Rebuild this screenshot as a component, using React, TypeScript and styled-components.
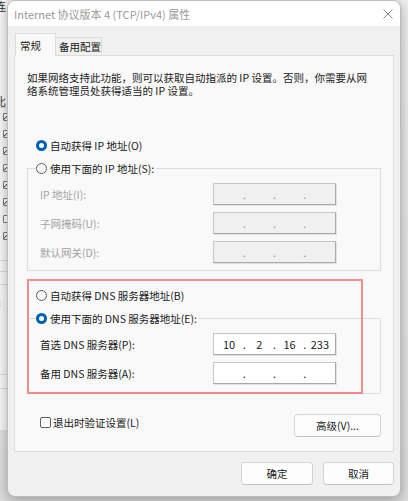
import React from 'react';
import styled, {createGlobalStyle} from 'styled-components';

const GlobalStyle = createGlobalStyle`
  html, body {
    margin: 0;
    padding: 0;
  }
  body {
    width: 408px;
    height: 501px;
    overflow: hidden;
    font-family: 'Noto Sans CJK SC', 'Noto Sans', sans-serif;
    background: #e6e6e6;
  }
`;

const Desktop = styled.div`
  display: flex;
  align-items: flex-start;
  width: 408px;
  height: 501px;
  overflow: hidden;
  background: linear-gradient(#ececec, #dcdcdc);
`;

const BackWindow = styled.div`
  width: 7px;
  height: 430px;
  flex-shrink: 0;
  display: flex;
  flex-direction: column;
  overflow: hidden;
  background: #f6f6f6;
  font-size: 11px;
  line-height: 12px;
  color: #333;
`;

const BackChar = styled.span<{$color?: string; $top: number}>`
  display: block;
  margin: ${p => p.$top}px 0 0 -5px;
  color: ${p => p.$color || '#333'};
`;

const BackList = styled.div`
  display: flex;
  flex-direction: column;
  gap: 9px;
  padding-top: 5px;
  border-top: 1px solid #dedede;
`;

const BackBox = styled.span<{$checked?: boolean}>`
  display: block;
  width: 7px;
  height: 8px;
  margin-left: 3px;
  box-sizing: border-box;
  border: 1px solid #777;
  border-radius: 1px;
  background: ${p => (p.$checked ? 'linear-gradient(135deg, #fff 40%, #555 45%, #fff 60%)' : '#fff')};
`;

const BackLine = styled.div<{$gap: number}>`
  margin-top: ${p => p.$gap}px;
  border-top: 1px solid #d8d8d8;
`;

const Dialog = styled.div`
  width: 394px;
  height: 497px;
  flex-shrink: 0;
  box-sizing: border-box;
  display: flex;
  flex-direction: column;
  border: 1px solid #bcbcbc;
  border-radius: 8px;
  overflow: hidden;
  background: #f0f0f0;
  box-shadow: 0 3px 12px rgba(0, 0, 0, 0.3);
  font-size: 10.5px;
  color: #1a1a1a;
`;

const TitleBar = styled.div`
  height: 25px;
  display: flex;
  align-items: center;
  justify-content: space-between;
  padding: 0 7px 0 6px;
  background: #ffffff;
`;

const Title = styled.span`
  font-size: 11px;
  color: #9a9a9a;
`;

const Body = styled.div`
  flex: 1;
  display: flex;
  flex-direction: column;
  padding: 7px 6px 0 6px;
`;

const Tabs = styled.div`
  display: flex;
  align-items: flex-end;
  height: 22px;
  padding-left: 1px;
`;

const Tab = styled.div<{$active?: boolean}>`
  box-sizing: border-box;
  display: flex;
  align-items: center;
  height: ${p => (p.$active ? 23 : 18)}px;
  width: ${p => (p.$active ? 41 : 46)}px;
  padding-left: ${p => (p.$active ? 4 : 3)}px;
  margin-bottom: ${p => (p.$active ? -1 : 0)}px;
  border: 1px solid #dcdcdc;
  border-bottom: none;
  border-left: ${p => (p.$active ? '1px solid #dcdcdc' : 'none')};
  background: ${p => (p.$active ? '#f9f9f9' : '#f0f0f0')};
  position: relative;
  z-index: ${p => (p.$active ? 1 : 0)};
  color: #1a1a1a;
`;

const Panel = styled.div`
  position: relative;
  display: flex;
  flex-direction: column;
  padding: 15px 12px 14px 12px;
  border: 1px solid #dcdcdc;
  background: #f9f9f9;
`;

const Description = styled.p`
  margin: 0;
  line-height: 13px;
`;

const Radio = styled.label<{$top?: number}>`
  display: flex;
  align-items: center;
  gap: 3px;
  height: 16px;
  margin: ${p => p.$top ?? 0}px 0 0 9px;
`;

const RadioDot = styled.span<{$checked?: boolean}>`
  box-sizing: border-box;
  width: 11px;
  height: 11px;
  border-radius: 50%;
  flex-shrink: 0;
  border: ${p => (p.$checked ? '3px solid #005fb8' : '1px solid #5f5f5f')};
  background: ${p => (p.$checked ? '#ffffff' : '#f5f5f5')};
`;

const Group = styled.fieldset<{$bottom: number}>`
  margin: 7px 0 0 0;
  min-width: 0;
  padding: 7px 0 ${p => p.$bottom}px 12px;
  border: 1px solid #dcdcdc;
  display: flex;
  flex-direction: column;
  gap: 7px;
`;

const Legend = styled.legend`
  padding: 0 2px 0 0;
  margin-left: -4px;
  height: 16px;
  & > label {
    margin: 0;
  }
`;

const FieldRow = styled.div`
  display: flex;
  align-items: center;
  justify-content: space-between;
  height: 22px;
  padding-right: 44px;
`;

const FieldLabel = styled.span<{$disabled?: boolean}>`
  color: ${p => (p.$disabled ? '#a3a3a3' : '#1a1a1a')};
`;

const IpBox = styled.div<{$disabled?: boolean}>`
  box-sizing: border-box;
  width: 123px;
  height: 22px;
  padding: 0 2px;
  display: grid;
  grid-template-columns: 1fr 4px 1fr 4px 1fr 4px 1fr;
  align-items: center;
  border: 1px solid #c6c6c6;
  border-right-color: #a8a8a8;
  border-bottom-color: #a8a8a8;
  box-shadow: 1px 1px 0 #e2e2e2;
  background: ${p => (p.$disabled ? '#f0f0f0' : '#ffffff')};
  color: ${p => (p.$disabled ? '#8a93a0' : '#222')};
  font-size: 11px;
`;

const Seg = styled.span`
  text-align: center;
`;

const Dot = styled.span`
  text-align: center;
`;

const BottomRow = styled.div`
  display: flex;
  align-items: flex-start;
  justify-content: space-between;
  margin-top: 20px;
  padding-left: 13px;
`;

const Check = styled.label`
  display: flex;
  align-items: center;
  gap: 2px;
  height: 16px;
`;

const CheckBox = styled.span`
  box-sizing: border-box;
  width: 11px;
  height: 11px;
  border: 1px solid #5f5f5f;
  border-radius: 2px;
  background: #fbfbfb;
`;

const Button = styled.button<{$width: number}>`
  box-sizing: border-box;
  width: ${p => p.$width}px;
  height: 23px;
  padding: 0;
  border: 1px solid #d3d3d3;
  border-bottom-color: #c2c2c2;
  border-radius: 4px;
  background: #fdfdfd;
  font-family: inherit;
  font-size: 10.5px;
  color: #1a1a1a;
`;

const Footer = styled.div`
  display: flex;
  justify-content: flex-end;
  gap: 10px;
  margin-top: 10px;
`;

const Highlight = styled.div`
  position: absolute;
  left: 12px;
  top: 223px;
  width: 336px;
  height: 115px;
  box-sizing: border-box;
  border: 2px solid #ef8c8c;
  pointer-events: none;
`;

const CloseIcon = () => (
  <svg width="10" height="10" viewBox="0 0 10 10">
    <path d="M0.5 0.5 L9.5 9.5 M9.5 0.5 L0.5 9.5" stroke="#8c8c8c" strokeWidth="1" />
  </svg>
);

const IpField = ({value, disabled}: {value?: string[]; disabled?: boolean}) => {
  const parts = value || ['', '', '', ''];
  return (
    <IpBox $disabled={disabled}>
      <Seg>{parts[0]}</Seg>
      <Dot>.</Dot>
      <Seg>{parts[1]}</Seg>
      <Dot>.</Dot>
      <Seg>{parts[2]}</Seg>
      <Dot>.</Dot>
      <Seg>{parts[3]}</Seg>
    </IpBox>
  );
};

const backBoxes = [true, true, true, true, true, true, false, true];

export default function App() {
  return (
    <>
      <GlobalStyle />
      <Desktop>
        <BackWindow>
          <BackChar $top={0}>连</BackChar>
          <BackChar $top={16} $color="#3a6fb0">I</BackChar>
          <BackChar $top={55}>比</BackChar>
          <BackList>
            {backBoxes.map((c, i) => (
              <BackBox key={i} $checked={c} />
            ))}
          </BackList>
          <BackLine $gap={20} />
          <BackLine $gap={10} />
          <BackLine $gap={12} />
          <BackChar $top={14} $color="#c07020">扌</BackChar>
          <BackLine $gap={63} />
          <BackLine $gap={13} />
        </BackWindow>
        <Dialog>
          <TitleBar>
            <Title>Internet 协议版本 4 (TCP/IPv4) 属性</Title>
            <CloseIcon />
          </TitleBar>
          <Body>
            <Tabs>
              <Tab $active>常规</Tab>
              <Tab>备用配置</Tab>
            </Tabs>
            <Panel>
              <Description>
                如果网络支持此功能，则可以获取自动指派的 IP 设置。否则，你需要从网
                <br />
                络系统管理员处获得适当的 IP 设置。
              </Description>

              <Radio $top={40}>
                <RadioDot $checked />
                自动获得 IP 地址(O)
              </Radio>
              <Group $bottom={7}>
                <Legend>
                  <Radio>
                    <RadioDot />
                    使用下面的 IP 地址(S):
                  </Radio>
                </Legend>
                <FieldRow>
                  <FieldLabel $disabled>IP 地址(I):</FieldLabel>
                  <IpField disabled />
                </FieldRow>
                <FieldRow>
                  <FieldLabel $disabled>子网掩码(U):</FieldLabel>
                  <IpField disabled />
                </FieldRow>
                <FieldRow>
                  <FieldLabel $disabled>默认网关(D):</FieldLabel>
                  <IpField disabled />
                </FieldRow>
              </Group>

              <Radio $top={16}>
                <RadioDot />
                自动获得 DNS 服务器地址(B)
              </Radio>
              <Group $bottom={9}>
                <Legend>
                  <Radio>
                    <RadioDot $checked />
                    使用下面的 DNS 服务器地址(E):
                  </Radio>
                </Legend>
                <FieldRow>
                  <FieldLabel>首选 DNS 服务器(P):</FieldLabel>
                  <IpField value={['10', '2', '16', '233']} />
                </FieldRow>
                <FieldRow>
                  <FieldLabel>备用 DNS 服务器(A):</FieldLabel>
                  <IpField />
                </FieldRow>
              </Group>

              <BottomRow>
                <Check>
                  <CheckBox />
                  退出时验证设置(L)
                </Check>
                <Button $width={87}>高级(V)...</Button>
              </BottomRow>

              <Highlight />
            </Panel>
            <Footer>
              <Button $width={72}>确定</Button>
              <Button $width={71}>取消</Button>
            </Footer>
          </Body>
        </Dialog>
      </Desktop>
    </>
  );
}
